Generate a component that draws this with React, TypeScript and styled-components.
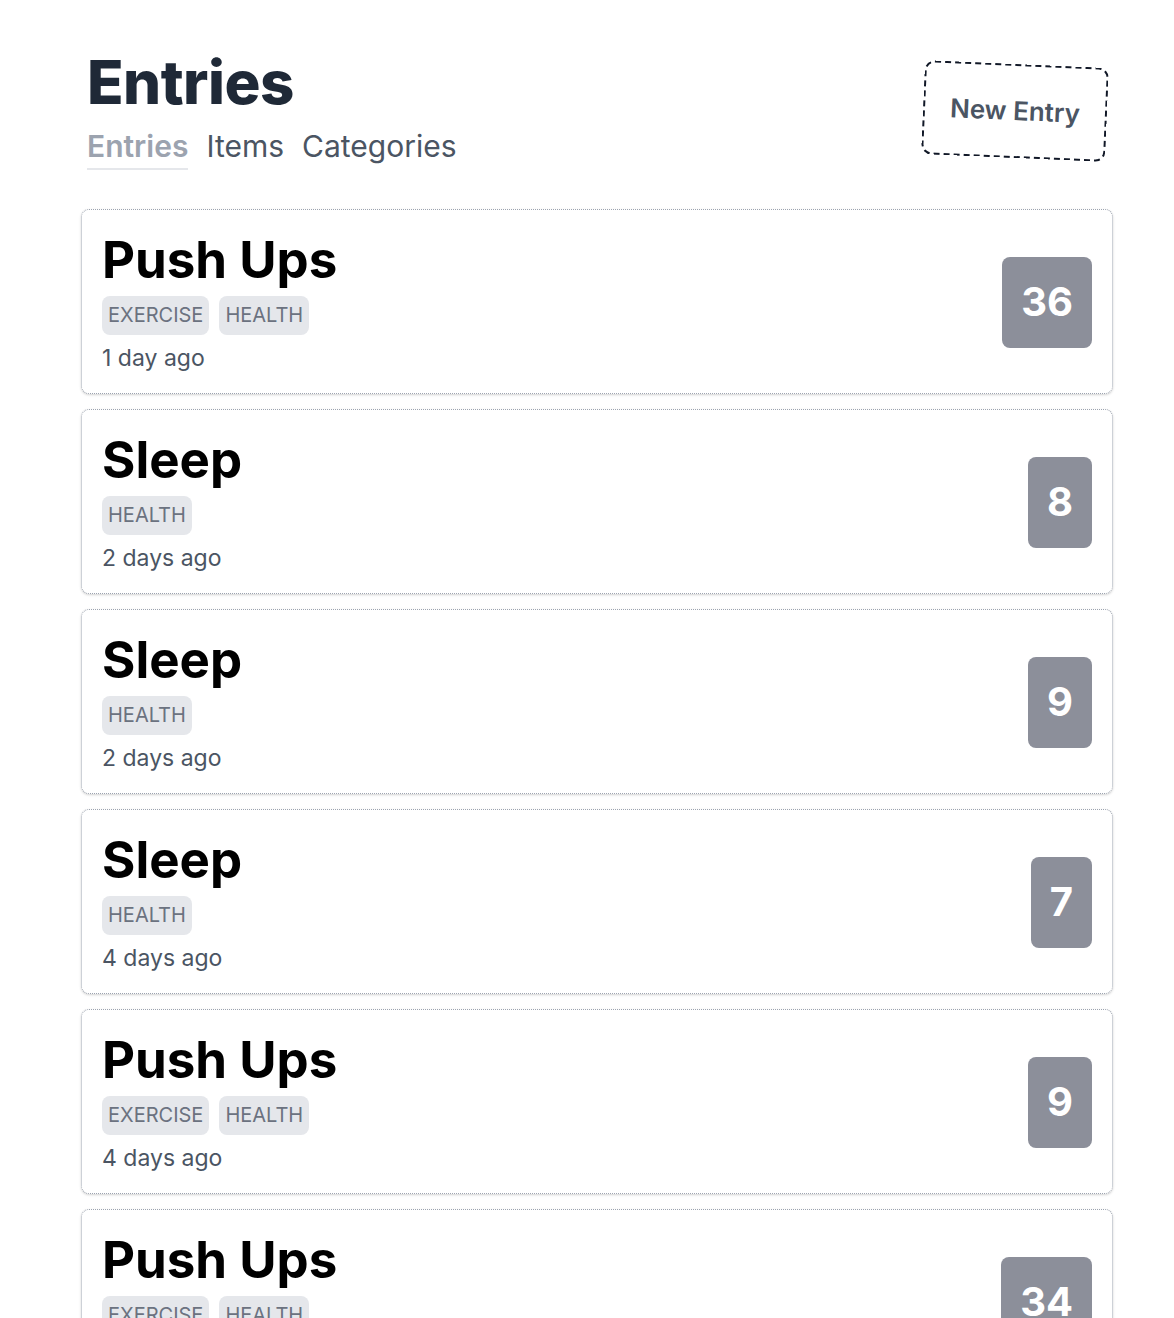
import React from "react";
import styled, { createGlobalStyle } from "styled-components";

const GlobalStyle = createGlobalStyle`
  html, body {
    margin: 0;
    padding: 0;
    background: #ffffff;
    font-family: Inter, "Noto Sans", "Liberation Sans", sans-serif;
  }
  * { box-sizing: border-box; }
`;

const Page = styled.main`
  padding: 52px 61px 40px 81px;
`;

const Header = styled.header`
  display: flex;
  align-items: center;
  justify-content: space-between;
  padding-right: 6px;
`;

const TitleBlock = styled.div`
  display: flex;
  flex-direction: column;
  gap: 16px;
  padding-left: 6px;
`;

const Title = styled.h1`
  margin: 0;
  font-size: 60px;
  line-height: 1;
  font-weight: 800;
  color: #1f2937;
  letter-spacing: -0.5px;
`;

const Tabs = styled.nav`
  display: flex;
  gap: 18px;
  align-items: flex-start;
`;

const Tab = styled.a<{ $active?: boolean }>`
  font-size: 30px;
  line-height: 36px;
  padding-bottom: 4px;
  font-weight: ${(p) => (p.$active ? 600 : 400)};
  color: ${(p) => (p.$active ? "#9ca3af" : "#4b5563")};
  border-bottom: 2px solid ${(p) => (p.$active ? "#e5e7eb" : "transparent")};
  text-decoration: none;
  cursor: pointer;
`;

const NewButton = styled.button`
  font-family: inherit;
  font-size: 26px;
  line-height: 36px;
  font-weight: 600;
  color: #4b5563;
  background: #ffffff;
  border: 2px dashed #111827;
  border-radius: 10px;
  padding: 27px 25px;
  transform: rotate(2.5deg);
  cursor: pointer;
`;

const List = styled.section`
  display: flex;
  flex-direction: column;
  gap: 15px;
  margin-top: 39px;
`;

const Card = styled.article`
  display: flex;
  align-items: center;
  justify-content: space-between;
  border: 1px dotted #9ca3af;
  border-radius: 8px;
  padding: 24px 20px 19px 20px;
  box-shadow: 0 1px 3px rgba(0, 0, 0, 0.12), 0 1px 2px rgba(0, 0, 0, 0.06);
  background: #ffffff;
`;

const CardBody = styled.div`
  display: flex;
  flex-direction: column;
`;

const CardTitle = styled.h2`
  margin: 0;
  font-size: 51px;
  line-height: 51px;
  font-weight: 700;
  color: #000000;
`;

const TagRow = styled.div`
  display: flex;
  gap: 10px;
  margin-top: 11px;
`;

const Tag = styled.span`
  font-size: 20px;
  line-height: 28px;
  padding: 5px 6px 6px;
  border-radius: 8px;
  background: #e5e7eb;
  color: #6b7280;
  text-transform: uppercase;
  font-weight: 400;
`;

const DateText = styled.div`
  margin-top: 7px;
  font-size: 23px;
  line-height: 32px;
  color: #4b5563;
`;

const Count = styled.div`
  background: #8c8f9a;
  color: #ffffff;
  font-size: 40px;
  line-height: 60px;
  font-weight: 700;
  padding: 15px 19px 16px;
  border-radius: 8px;
  margin-bottom: 4px;
`;

type Entry = { name: string; tags: string[]; when: string; value: number };

const entries: Entry[] = [
  { name: "Push Ups", tags: ["Exercise", "Health"], when: "1 day ago", value: 36 },
  { name: "Sleep", tags: ["Health"], when: "2 days ago", value: 8 },
  { name: "Sleep", tags: ["Health"], when: "2 days ago", value: 9 },
  { name: "Sleep", tags: ["Health"], when: "4 days ago", value: 7 },
  { name: "Push Ups", tags: ["Exercise", "Health"], when: "4 days ago", value: 9 },
  { name: "Push Ups", tags: ["Exercise", "Health"], when: "5 days ago", value: 34 },
];

export default function App() {
  return (
    <>
      <GlobalStyle />
      <Page>
        <Header>
          <TitleBlock>
            <Title>Entries</Title>
            <Tabs>
              <Tab $active>Entries</Tab>
              <Tab>Items</Tab>
              <Tab>Categories</Tab>
            </Tabs>
          </TitleBlock>
          <NewButton>New Entry</NewButton>
        </Header>
        <List>
          {entries.map((e, i) => (
            <Card key={i}>
              <CardBody>
                <CardTitle>{e.name}</CardTitle>
                <TagRow>
                  {e.tags.map((t) => (
                    <Tag key={t}>{t}</Tag>
                  ))}
                </TagRow>
                <DateText>{e.when}</DateText>
              </CardBody>
              <Count>{e.value}</Count>
            </Card>
          ))}
        </List>
      </Page>
    </>
  );
}
